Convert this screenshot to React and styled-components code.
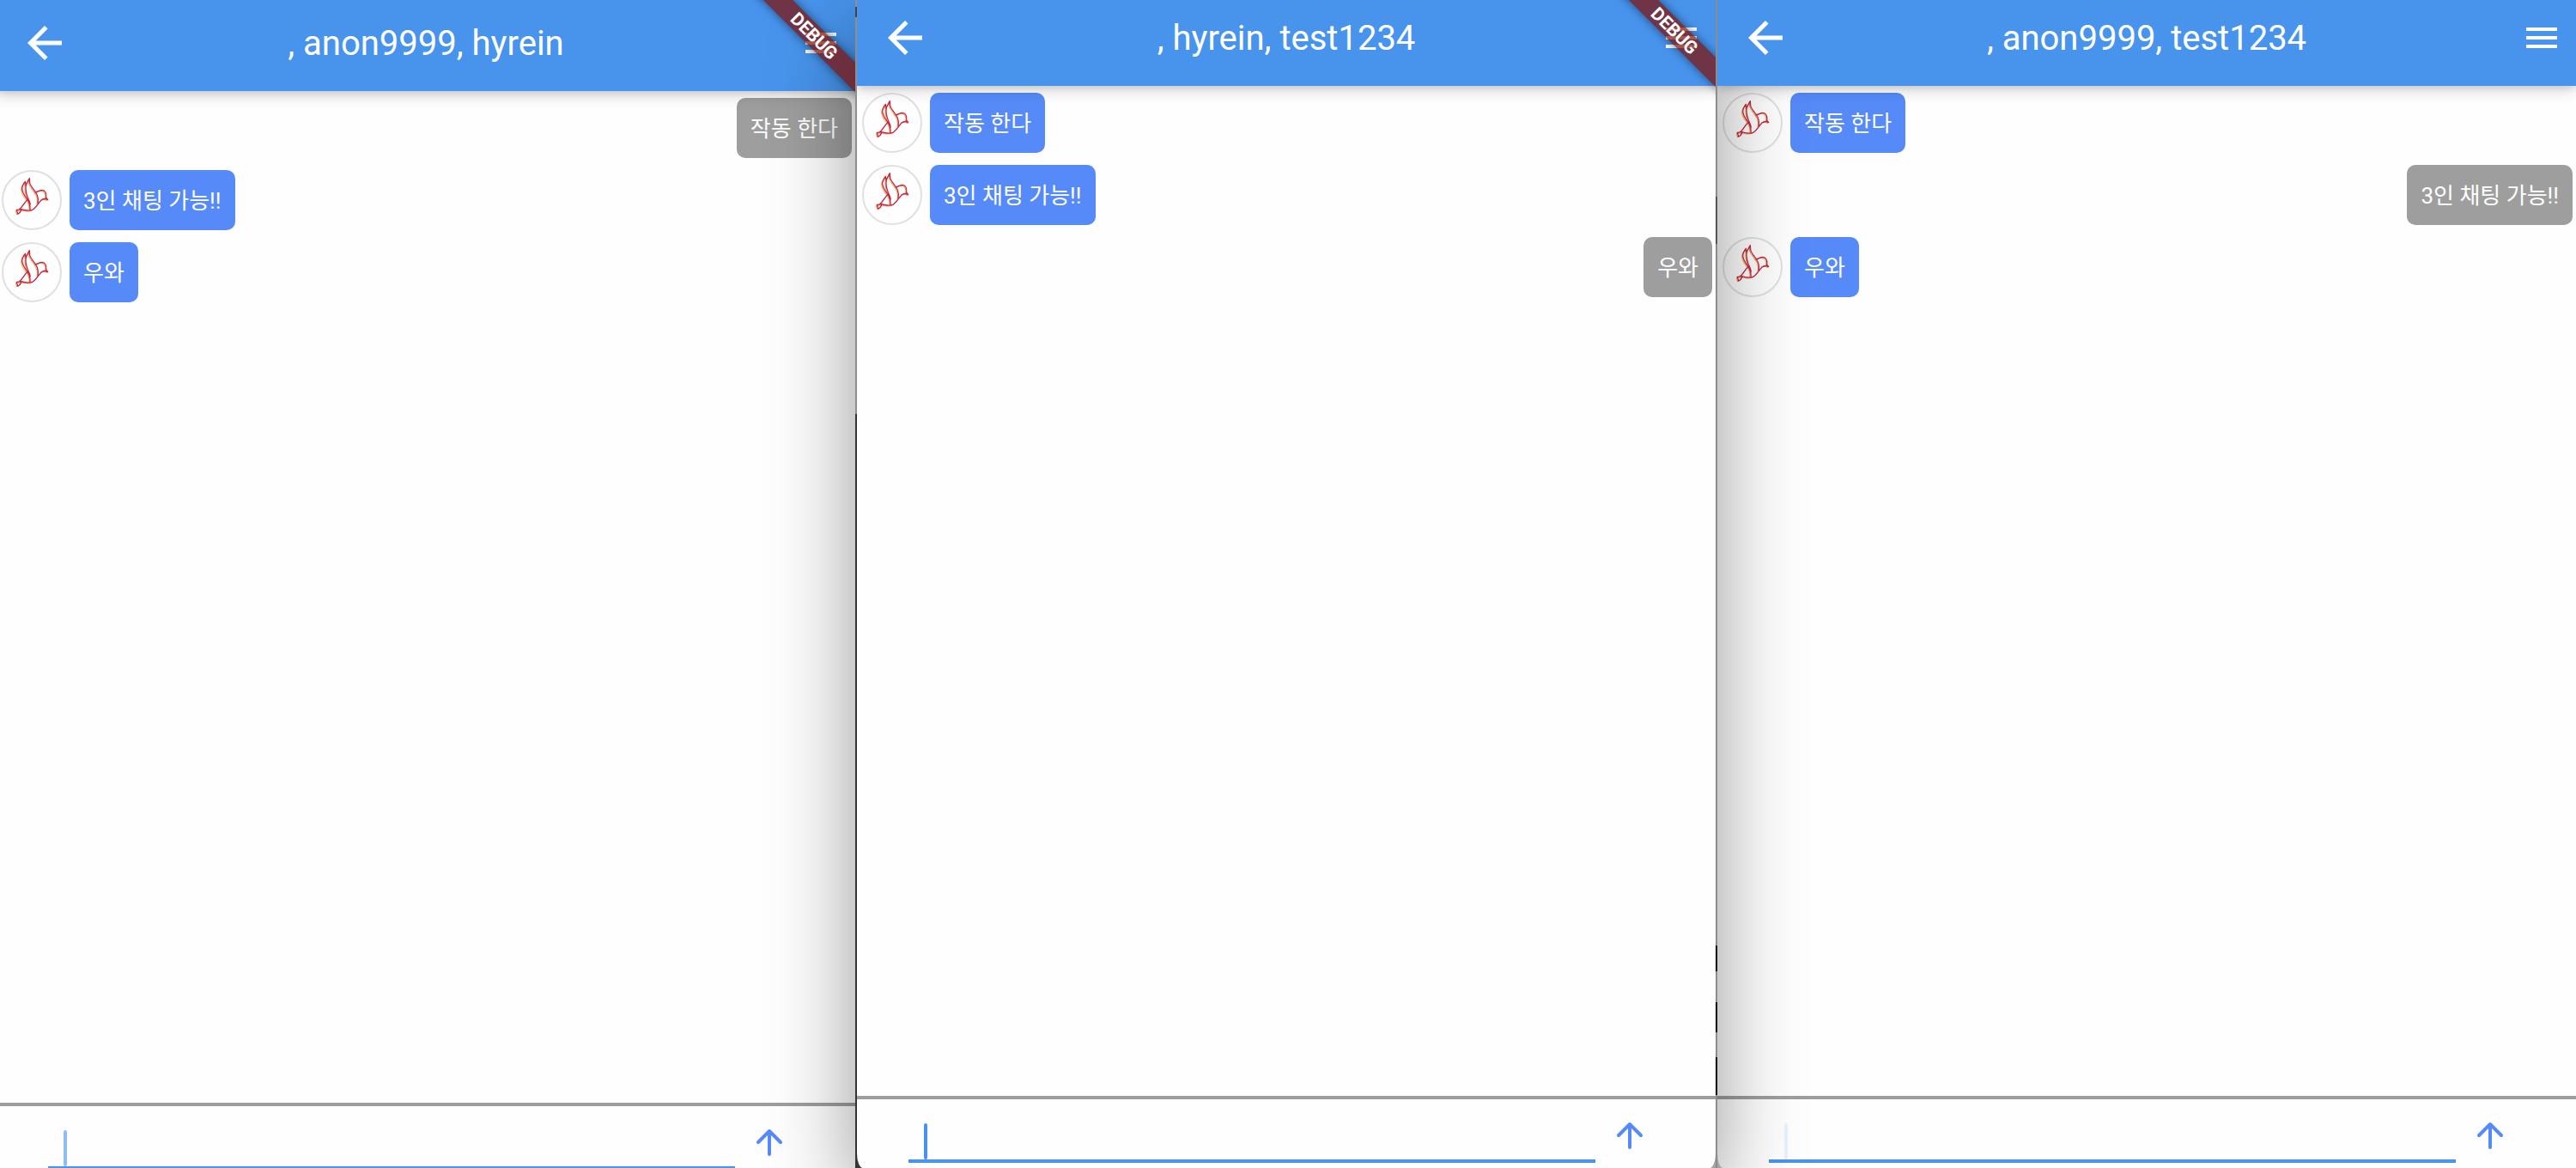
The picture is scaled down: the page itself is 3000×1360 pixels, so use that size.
import React from "react";
import styled, { createGlobalStyle, css } from "styled-components";

const GlobalStyle = createGlobalStyle`
  *, *::before, *::after { box-sizing: border-box; }
  body {
    margin: 0;
    font-family: Roboto, "Noto Sans CJK KR", sans-serif;
  }
`;

const Desktop = styled.div`
  display: grid;
  grid-template-columns: minmax(0, 996fr) 2px minmax(0, 1000fr) 2px minmax(0, 1000fr);
  min-height: 100vh;
  overflow: hidden;
  background: linear-gradient(to right, #444 50%, #c4c4c4 50%);
`;

const Window = styled.section`
  position: relative;
  display: flex;
  flex-direction: column;
  min-width: 0;
  overflow: hidden;
  background: #fefefe;
  border-radius: ${(p) => p.$corners};
  ${(p) =>
    p.$bleed &&
    css`
      margin: 0 0 -8px -4px;
    `}
  ${(p) =>
    p.$active &&
    css`
      z-index: 1;
      box-shadow: 0 36px 100px rgba(0, 0, 0, 0.42);
    `}
`;

const Seam = styled.div`
  position: relative;
  z-index: 2;
  background: ${(p) => p.$fill};
`;

const leftFill =
  "linear-gradient(#8e8e8e 8px, #444 8px 20px, #8e8e8e 20px 482px, #333 482px)";
const rightFill =
  "linear-gradient(#8c8c8c 229px, #555 229px 284px, #8c8c8c 284px 1101px, #000 1101px 1131px, #8c8c8c 1131px 1167px, #000 1167px 1202px, #8c8c8c 1202px 1231px, #000 1231px 1275px, #8c8c8c 1275px)";

const AppBar = styled.header`
  position: relative;
  z-index: 1;
  flex: none;
  display: grid;
  grid-template-columns: 60px 1fr 60px;
  align-items: center;
  height: ${(p) => (p.$tall ? "106px" : "100px")};
  padding: 0 10px ${(p) => (p.$tall ? "6px" : "12px")} 26px;
  background: #4894ed;
  box-shadow: 0 2px 8px rgba(0, 0, 0, 0.12), 0 6px 16px rgba(0, 0, 0, 0.14);
`;

const Title = styled.h1`
  margin: 0 0 0 -16px;
  padding-top: 2px;
  color: #fff;
  font-size: 40px;
  font-weight: 400;
  line-height: 48px;
  text-align: center;
  white-space: nowrap;
`;

const IconButton = styled.button`
  display: flex;
  align-items: center;
  justify-content: center;
  width: 60px;
  height: 60px;
  padding: 0;
  border: 0;
  background: none;
  color: #fff;
  cursor: pointer;
`;

const Ribbon = styled.div`
  position: absolute;
  z-index: 2;
  top: ${(p) => (p.$tall ? "30px" : "24px")};
  right: -72px;
  width: 240px;
  height: 24px;
  transform: rotate(45deg);
  background: rgba(129, 12, 0, 0.7);
  box-shadow: 0 0 12px rgba(0, 0, 0, 0.5);
  color: #fff;
  font-size: 21px;
  font-weight: 700;
  line-height: 24px;
  text-align: center;
  pointer-events: none;
`;

const Messages = styled.ul`
  flex: 1;
  display: flex;
  flex-direction: column;
  gap: 14px;
  margin: 0;
  padding: 8px 4px 8px 6px;
  list-style: none;
`;

const Message = styled.li`
  display: flex;
  gap: 9px;
  justify-content: ${(p) => (p.$mine ? "flex-end" : "flex-start")};
`;

const Avatar = styled.span`
  display: block;
  width: 70px;
  height: 70px;
  border: 2px solid #e0e0e0;
  border-radius: 50%;

  svg {
    display: block;
    width: 100%;
    height: 100%;
  }
`;

const Bubble = styled.p`
  margin: 0;
  padding: 17px 16px 15px;
  border-radius: 10px;
  background: ${(p) => (p.$mine ? "#9e9e9e" : "#568af8")};
  color: #fff;
  font-size: 26px;
  line-height: 38px;
  white-space: nowrap;
`;

const Composer = styled.form`
  flex: none;
  display: flex;
  align-items: flex-start;
  height: 84px;
  padding-left: 60px;
  border-top: 4px solid #9e9e9e;
`;

const Field = styled.label`
  display: flex;
  width: 85.1%;
  height: 74px;
  padding: 28px 0 0 18px;
  border-bottom: 4px solid #4894ed;
`;

const Caret = styled.span`
  flex: none;
  width: 4px;
  height: 42px;
  border-radius: 2px;
  background: #4894ed;
  opacity: ${(p) => p.$strength};
`;

const TextInput = styled.input`
  flex: 1;
  min-width: 0;
  height: 42px;
  padding: 0;
  border: 0;
  outline: 0;
  background: none;
  caret-color: transparent;
  font: inherit;
  font-size: 32px;
`;

const SendButton = styled.button`
  display: flex;
  align-items: center;
  justify-content: center;
  width: 80px;
  height: 80px;
  padding: 4px 0 0;
  border: 0;
  background: none;
  color: #568af8;
  cursor: pointer;
`;

const BackIcon = () => (
  <svg width="60" height="60" viewBox="0 0 24 24" fill="currentColor" aria-hidden="true">
    <path d="M20 11H7.83l5.59-5.59L12 4l-8 8 8 8 1.41-1.41L7.83 13H20v-2z" />
  </svg>
);

const MenuIcon = () => (
  <svg width="48" height="48" viewBox="0 0 24 24" fill="currentColor" aria-hidden="true">
    <path d="M3 18h18v-2H3v2zm0-5h18v-2H3v2zm0-7v2h18V6H3z" />
  </svg>
);

const SendIcon = () => (
  <svg
    width="48"
    height="48"
    viewBox="0 0 48 48"
    fill="none"
    stroke="currentColor"
    strokeWidth="4"
    strokeLinecap="round"
    strokeLinejoin="round"
    aria-hidden="true"
  >
    <path d="M24 38V11M11 24L24 11L37 24" />
  </svg>
);

const birdPath =
  "M105 195C106 178 103 166 95 156C86 144 78 134 77 120C77 110 82 102 88 94L90 108L103 83L104 100C108 113 124 128 130 142C134 152 134 162 132 171" +
  "M91 106C88 122 92 138 97 150C101 158 105 166 106 176" +
  "M122 131C131 131 137 124 147 124C157 125 163 134 161 150L167 158C158 152 150 154 143 160C134 170 126 186 113 193C104 197 84 195 75 191L58 193L62 207C70 205 74 195 75 191" +
  "M66 193C78 184 84 170 95 158";

const BirdIcon = () => (
  <svg viewBox="12 60 198 198" fill="none" strokeLinejoin="round" aria-hidden="true">
    <path d={birdPath} stroke="#f0a030" strokeWidth="3" transform="translate(-3 3)" />
    <path d={birdPath} stroke="#c4264f" strokeWidth="4" />
  </svg>
);

const rooms = [
  {
    id: "test1234",
    title: ", anon9999, hyrein",
    debug: true,
    bleed: true,
    caret: 0.62,
    corners: "0",
    messages: [
      { text: "작동 한다", mine: true },
      { text: "3인 채팅 가능!!" },
      { text: "우와" },
    ],
  },
  {
    id: "anon9999",
    title: ", hyrein, test1234",
    debug: true,
    active: true,
    caret: 1,
    corners: "0 0 7px 7px / 0 0 17px 17px",
    seam: leftFill,
    messages: [
      { text: "작동 한다" },
      { text: "3인 채팅 가능!!" },
      { text: "우와", mine: true },
    ],
  },
  {
    id: "hyrein",
    title: ", anon9999, test1234",
    caret: 0.12,
    corners: "0 0 0 7px / 0 0 0 17px",
    seam: rightFill,
    messages: [
      { text: "작동 한다" },
      { text: "3인 채팅 가능!!", mine: true },
      { text: "우와" },
    ],
  },
];

function ChatWindow({ room }) {
  return (
    <Window $bleed={room.bleed} $active={room.active} $corners={room.corners}>
      <AppBar $tall={room.bleed}>
        <IconButton type="button" aria-label="Back">
          <BackIcon />
        </IconButton>
        <Title>{room.title}</Title>
        <IconButton type="button" aria-label="Menu">
          <MenuIcon />
        </IconButton>
      </AppBar>
      {room.debug && <Ribbon $tall={room.bleed}>DEBUG</Ribbon>}
      <Messages>
        {room.messages.map((message) => (
          <Message key={message.text} $mine={message.mine}>
            {!message.mine && (
              <Avatar>
                <BirdIcon />
              </Avatar>
            )}
            <Bubble $mine={message.mine}>{message.text}</Bubble>
          </Message>
        ))}
      </Messages>
      <Composer onSubmit={(event) => event.preventDefault()}>
        <Field htmlFor={`message-${room.id}`}>
          <Caret $strength={room.caret} />
          <TextInput id={`message-${room.id}`} type="text" aria-label="Message" />
        </Field>
        <SendButton type="submit" aria-label="Send">
          <SendIcon />
        </SendButton>
      </Composer>
    </Window>
  );
}

export default function App() {
  return (
    <>
      <GlobalStyle />
      <Desktop>
        {rooms.map((room) => (
          <React.Fragment key={room.id}>
            {room.seam && <Seam $fill={room.seam} />}
            <ChatWindow room={room} />
          </React.Fragment>
        ))}
      </Desktop>
    </>
  );
}
